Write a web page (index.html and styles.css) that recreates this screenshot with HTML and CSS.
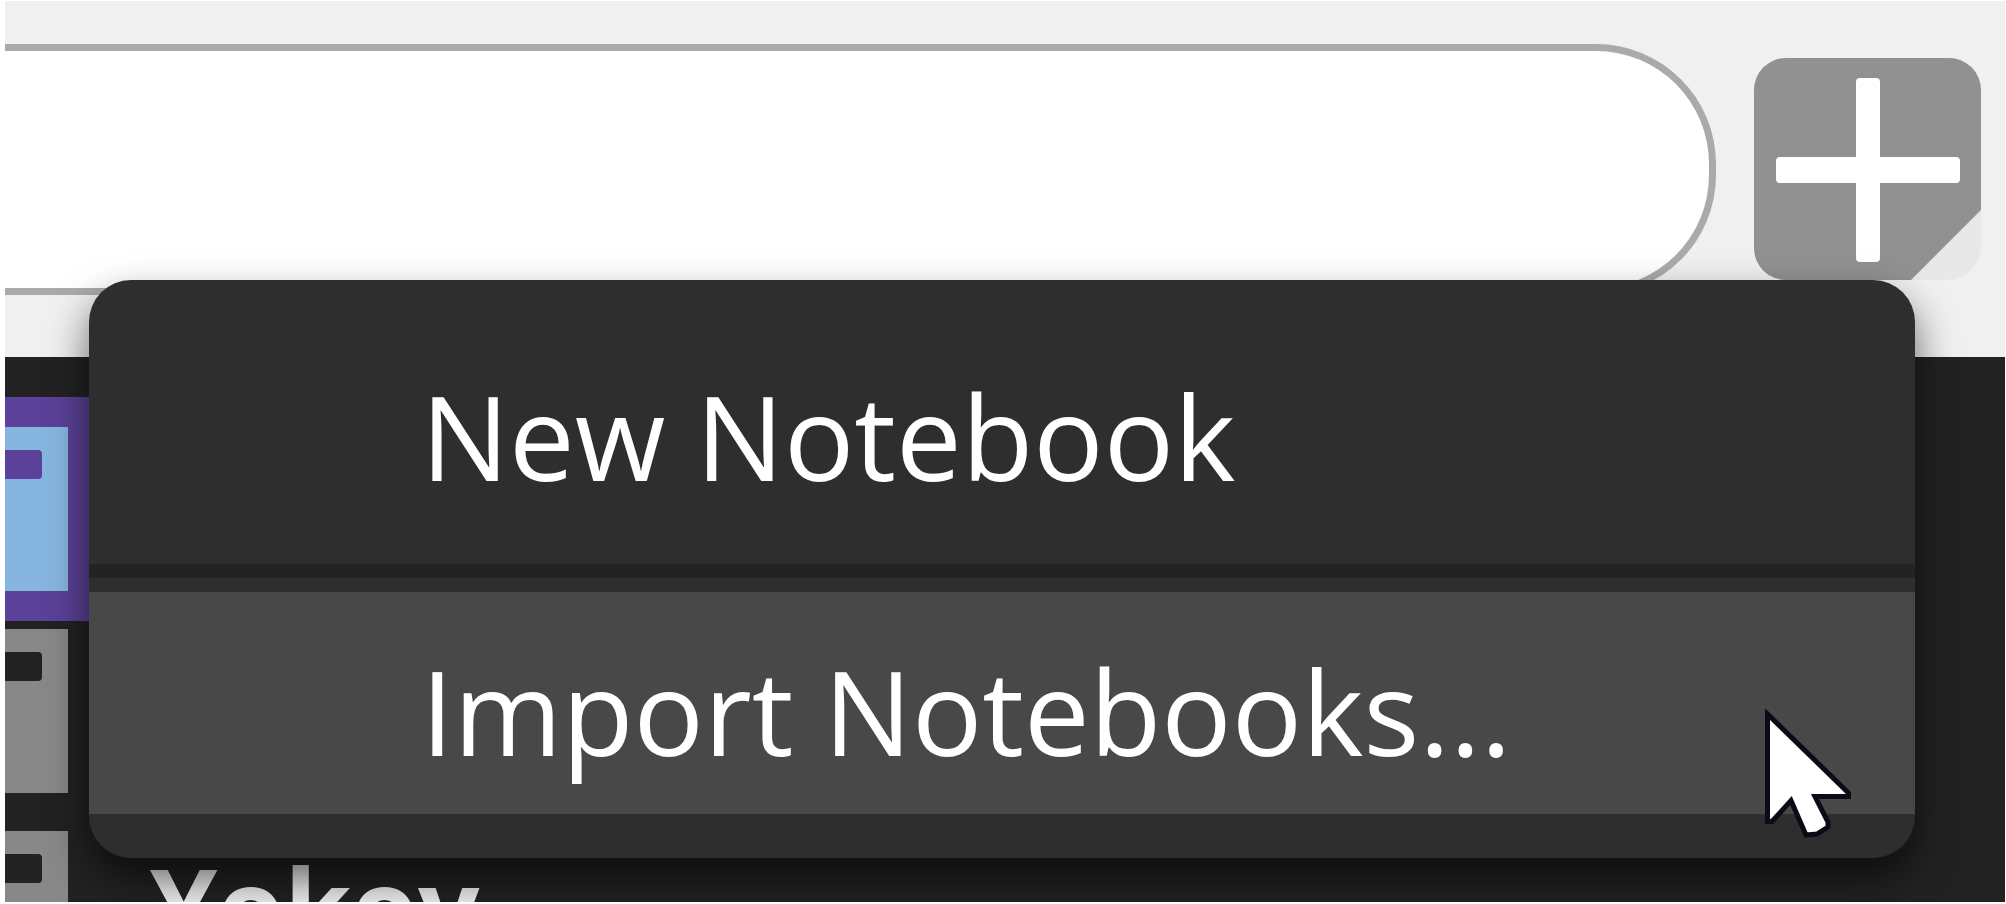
FILE: index.html
```html
<!DOCTYPE html>
<html lang="en">
    <head>
        <meta charset="utf-8" />
        <title>Notebooks</title>
        <meta name="viewport" content="width=device-width, initial-scale=1.0" />
        <link rel="stylesheet" href="styles.css">
    </head>

    <body>
        <div class="window">
            <header class="toolbar">
                <input class="search" type="search" aria-label="Search" />
                <button class="add" type="button" aria-label="Add" aria-haspopup="menu">
                    <svg viewBox="0 0 227 222" aria-hidden="true">
                        <rect width="227" height="222" rx="34" fill="#e8e8e8" />
                        <path d="M32 0H195A32 32 0 0 1 227 32V152L157 222H32A32 32 0 0 1 0 190V32A32 32 0 0 1 32 0Z" fill="#919191" />
                        <rect x="102" y="20" width="24" height="184" rx="4" fill="#fff" />
                        <rect x="22" y="99" width="184" height="26" rx="4" fill="#fff" />
                    </svg>
                </button>
            </header>

            <main class="content">
                <ul class="notebooks">
                    <li class="notebook selected"><span class="cover"></span></li>
                    <li class="notebook"><span class="cover"></span></li>
                    <li class="notebook"><span class="cover"></span><span class="name">Yokoy</span></li>
                </ul>
            </main>

            <div class="menu" role="menu">
                <button class="item" type="button" role="menuitem">New Notebook</button>
                <hr class="separator" />
                <button class="item active" type="button" role="menuitem">Import Notebooks...</button>
            </div>

            <svg class="pointer" viewBox="0 0 88 131" aria-hidden="true">
                <path d="M2.5 5V112.5H7L26 91.5L41 126L52 125L63 118V113L50 87.5H83.5V84Z" fill="#fff" stroke="#0b0b16" stroke-width="5" />
            </svg>
        </div>
    </body>
</html>
```
FILE: styles.css
```css
* {
    box-sizing: border-box;
}

body {
    margin: 0;
    background: #fff;
    font-family: "Open Sans", "Noto Sans", sans-serif;
    font-size: 117px;
}

.window {
    position: relative;
    display: flex;
    flex-direction: column;
    height: 100vh;
    border: solid #fff;
    border-width: 1px 1px 2px 5px;
    overflow: hidden;
}

.toolbar {
    display: flex;
    align-items: flex-start;
    gap: 38px;
    padding: 43px 24px 62px 0;
    background: #f0f0f0;
}

.search {
    flex: 1;
    min-width: 0;
    height: 251px;
    padding: 0 120px 0 40px;
    border: 7px solid #aaa;
    border-left: 0;
    border-radius: 0 120px 120px 0;
    background: #fff;
    font: inherit;
    appearance: none;
    outline: none;
}

.add {
    width: 227px;
    margin-top: 14px;
    padding: 0;
    border: 0;
    background: none;
}

.add svg {
    display: block;
    width: 100%;
}

.content {
    flex: 1;
    min-height: 0;
    background: #222;
    overflow: hidden;
}

.notebooks {
    display: flex;
    flex-direction: column;
    gap: 38px;
    width: 60%;
    margin: 0;
    padding: 70px 0 0;
    list-style: none;
}

.notebook {
    --back: #222;
    --cover: #888;
    display: flex;
    gap: 82px;
    height: 164px;
}

/* the highlight reaches past the row on every side */
.notebook.selected {
    --back: #5b4199;
    --cover: #86b6e0;
    background: var(--back);
    box-shadow: 0 0 0 30px var(--back);
}

.cover {
    width: 63px;
    height: 100%;
    padding-top: 23px;
    background: var(--cover);
}

.cover::before {
    content: "";
    display: block;
    width: 37px;
    height: 29px;
    border-radius: 0 4px 4px 0;
    background: var(--back);
}

.name {
    color: #eee;
    font-size: 108px;
    font-weight: 700;
    line-height: 150px;
}

.menu {
    position: absolute;
    top: 279px;
    left: 84px;
    right: 90px;
    padding: 37px 0 44px;
    border-radius: 42px;
    background: #2e2e2e;
    box-shadow: 0 20px 40px rgba(0, 0, 0, 0.6);
}

.item {
    display: block;
    width: 100%;
    padding: 38px 332px 22px;
    border: 0;
    background: none;
    color: #fff;
    font: inherit;
    line-height: 162px;
    text-align: left;
    white-space: nowrap;
}

.item.active {
    background: #484848;
}

.separator {
    height: 14px;
    margin: 25px 0 14px;
    border: 0;
    background: #232323;
}

.pointer {
    position: absolute;
    top: 708px;
    right: 152px;
    width: 88px;
}
```
